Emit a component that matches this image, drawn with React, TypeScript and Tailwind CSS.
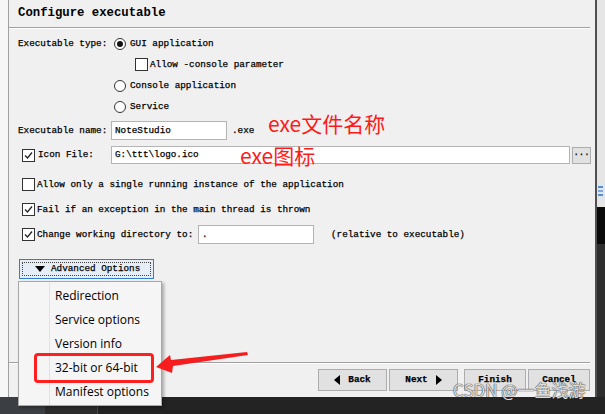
import React from "react";

const mono = "font-['Liberation_Mono',monospace] text-[9.3px] text-black [-webkit-text-stroke:0.25px_#000]";

function Radio({ checked }: { checked?: boolean }) {
  return (
    <div className="w-[12px] h-[12px] rounded-full border border-[#333] bg-white flex items-center justify-center shrink-0">
      {checked && <div className="w-[6px] h-[6px] rounded-full bg-[#111]" />}
    </div>
  );
}

function Check({ checked }: { checked?: boolean }) {
  return (
    <div className="w-[13px] h-[13px] border border-[#333] bg-white flex items-center justify-center shrink-0">
      {checked && (
        <svg width="11" height="11" viewBox="0 0 11 11">
          <polyline points="2,5.5 4.5,8 9,2.5" fill="none" stroke="#222" strokeWidth="1.3" />
        </svg>
      )}
    </div>
  );
}

function Btn({ children, w }: { children: React.ReactNode; w: string }) {
  return (
    <div className={`${w} h-[22px] bg-[#e1e1e1] border border-[#adadad] flex items-center justify-center ${mono} font-bold`}>
      {children}
    </div>
  );
}

export default function App() {
  return (
    <div className="relative w-[605px] h-[414px] overflow-hidden bg-[#2a2a2a] flex flex-col">
      <div className="flex h-[397px]">
        <div className="w-[8px] bg-[#f7f7f7]" />
        <div className="flex-1 bg-[#f0f0f0] border-l border-[#a0a0a0] flex flex-col">
          <div className="h-[27px] flex items-center pl-[9px]">
            <span className="font-['Liberation_Mono',monospace] text-[12.3px] font-bold text-black">Configure executable</span>
          </div>
          <div className="mr-[5px] h-[1px] bg-[#a0a0a0]" />
          <div className="mr-[5px] h-[1px] bg-white" />
          <div className={`pl-[9px] mt-[4px] flex flex-col ${mono}`}>
            <div className="h-[21px] flex items-center">
              <span className="w-[96px]">Executable type:</span>
              <Radio checked />
              <span className="ml-[4px]">GUI application</span>
            </div>
            <div className="h-[21px] flex items-center pl-[117px]">
              <Check />
              <span className="ml-[2px]">Allow -console parameter</span>
            </div>
            <div className="h-[21px] flex items-center pl-[96px]">
              <Radio />
              <span className="ml-[4px]">Console application</span>
            </div>
            <div className="h-[21px] flex items-center pl-[96px]">
              <Radio />
              <span className="ml-[4px]">Service</span>
            </div>
            <div className="h-[19px] mt-[4px] flex items-center">
              <span className="w-[93px]">Executable name:</span>
              <div className="w-[116px] h-[19px] bg-white border border-[#b4b4b4] flex items-center pl-[3px]">NoteStudio</div>
              <span className="ml-[5px]">.exe</span>
            </div>
            <div className="h-[18px] mt-[6px] flex items-center">
              <div className="w-[93px] flex items-center pl-[4px]">
                <Check checked />
                <span className="ml-[3px]">Icon File:</span>
              </div>
              <div className="w-[459px] h-[18px] bg-white border border-[#b4b4b4] flex items-center pl-[3px]">G:\ttt\logo.ico</div>
              <div className="ml-[2px] w-[19px] h-[17px] bg-[#e1e1e1] border border-[#adadad] flex items-center justify-center text-[9px] leading-none pb-[3px]">...</div>
            </div>
            <div className="h-[25px] mt-[8px] flex items-center pl-[4px]">
              <Check />
              <span className="ml-[2px]">Allow only a single running instance of the application</span>
            </div>
            <div className="h-[25px] flex items-center pl-[4px]">
              <Check checked />
              <span className="ml-[2px]">Fail if an exception in the main thread is thrown</span>
            </div>
            <div className="h-[25px] flex items-center pl-[4px]">
              <Check checked />
              <span className="ml-[2px] w-[161px]">Change working directory to:</span>
              <div className="w-[116px] h-[19px] bg-white border border-[#b4b4b4] flex items-center pl-[3px]">.</div>
              <span className="ml-[17px]">(relative to executable)</span>
            </div>
            <div className="mt-[12px] ml-[1px] w-[135px] h-[20px] border border-[#2f7fd0] bg-[#e5eef7] p-[2px]">
              <div className="w-full h-full border border-dotted border-[#444] flex items-center pl-[12px]">
                <svg width="10" height="6" viewBox="0 0 10 6"><polygon points="0,0 10,0 5,6" fill="#000" /></svg>
                <span className="ml-[6px]">Advanced Options</span>
              </div>
            </div>
          </div>
          <div className="mt-auto">
            <div className="mr-[5px] h-[1px] bg-[#a0a0a0]" />
            <div className="mr-[5px] h-[1px] bg-white" />
            <div className="mt-[5px] mb-[6px] flex justify-end pr-[5px]">
              <Btn w="w-[69px]">
                <svg width="6" height="10" viewBox="0 0 6 10"><polygon points="6,0 6,10 0,5" fill="#000" /></svg>
                <span className="ml-[8px]">Back</span>
              </Btn>
              <div className="w-[2px]" />
              <Btn w="w-[69px]">
                <span className="mr-[8px]">Next</span>
                <svg width="6" height="10" viewBox="0 0 6 10"><polygon points="0,0 0,10 6,5" fill="#000" /></svg>
              </Btn>
              <div className="w-[6px]" />
              <Btn w="w-[62px]">Finish</Btn>
              <div className="w-[2px]" />
              <Btn w="w-[62px]">Cancel</Btn>
            </div>
          </div>
        </div>
        <div className="w-[2px] bg-[#505050]" />
        <div className="w-[8px] flex flex-col">
          <div className="h-[183px] bg-[#e6e6e6]" />
          <div className="h-[16px] bg-[#dfe6ee] flex flex-col justify-center items-start pl-[1px] gap-[2px]">
            <div className="w-[5px] h-[2px] bg-[#5b8fc7]" />
            <div className="w-[5px] h-[2px] bg-[#7fa9d6]" />
            <div className="w-[5px] h-[2px] bg-[#5b8fc7]" />
          </div>
          <div className="h-[8px] bg-[#e6e6e6]" />
          <div className="h-[37px] bg-[#0b0b0b]" />
          <div className="flex-1 bg-[#2e2e2e]" />
        </div>
      </div>
      <div className="flex-1 flex">
        <div className="w-[45px] bg-[#3b3e42]" />
        <div className="w-[53px] bg-[#2c2c2c] border-r border-[#4a4a4a]" />
        <div className="flex-1 bg-[#232323]" />
      </div>

      {/* dropdown menu */}
      <div className="absolute left-[18px] top-[281px] w-[144px] h-[125px] bg-[#f5f5f5] border border-[#a8a8a8] shadow-[2px_2px_3px_rgba(0,0,0,0.3)] pt-[2px] font-['Open_Sans',sans-serif] text-[12px] text-black">
        <div className="absolute left-[30px] top-0 bottom-0 w-[1px] bg-[#e2e2e2]" />
        {["Redirection", "Service options", "Version info", "32-bit or 64-bit", "Manifest options"].map((t) => (
          <div key={t} className="h-[24px] flex items-center pl-[36px]">{t}</div>
        ))}
      </div>

      {/* red highlight */}
      <div className="absolute left-[34px] top-[353px] w-[120px] h-[30px] border-[3px] border-[#ff1f1f] rounded-[4px]" />
      <svg className="absolute left-0 top-0" width="605" height="414" viewBox="0 0 605 414">
        <polygon points="156,367 170,355 171,360 247,352 248,355 173,366 172,373" fill="#f51d1d" />
      </svg>

      {/* annotations */}
      <div className="absolute left-[268px] top-[110px] font-['Noto_Sans_CJK_SC',sans-serif] text-[21px] leading-[26px] text-[#ff1a1a]">exe文件名称</div>
      <div className="absolute left-[240px] top-[142px] font-['Noto_Sans_CJK_SC',sans-serif] text-[21px] leading-[26px] text-[#ff1a1a]">exe图标</div>

      {/* watermark */}
      <div className="absolute left-[453px] top-[379px] font-['Noto_Sans_CJK_SC',sans-serif] text-[17px] leading-[22px] text-[#dcdcdc] [text-shadow:0_0_1px_#333,0_0_1px_#333]">CSDN @一鱼浅游</div>
    </div>
  );
}
